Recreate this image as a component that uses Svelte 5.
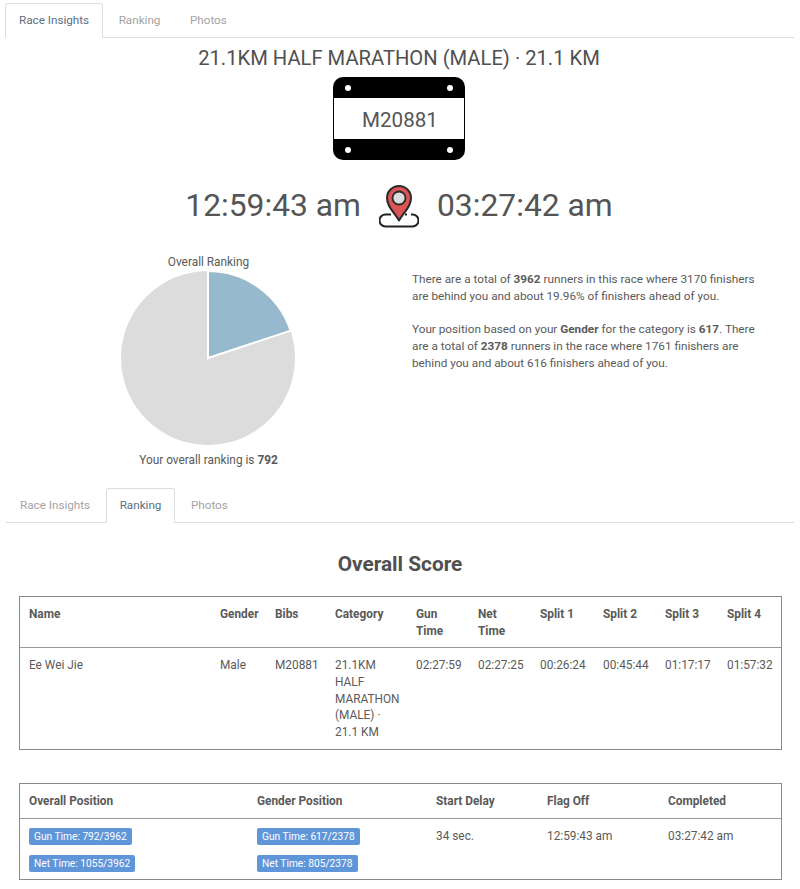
<script>
  const tabs = ['Race Insights', 'Ranking', 'Photos'];
  const heads = ['Name', 'Gender', 'Bibs', 'Category', 'Gun Time', 'Net Time', 'Split 1', 'Split 2', 'Split 3', 'Split 4'];
  const row = ['Ee Wei Jie', 'Male', 'M20881', '21.1KM HALF MARATHON (MALE) · 21.1 KM', '02:27:59', '02:27:25', '00:26:24', '00:45:44', '01:17:17', '01:57:32'];
</script>

{#snippet tabbar(active)}
  <div class="tabs" class:second={active === 1}>
    {#each tabs as t, i}
      <div class="tab" class:active={i === active}>{t}</div>
    {/each}
  </div>
{/snippet}

<div class="page">
  {@render tabbar(0)}
  <h1>21.1KM HALF MARATHON (MALE) · 21.1 KM</h1>
  <div class="bib">
    <span class="holes"><i></i><i></i></span>
    <span class="num">M20881</span>
    <span class="holes"><i></i><i></i></span>
  </div>
  <div class="times">
    <span>12:59:43 am</span>
    <svg width="40" height="46" viewBox="0 0 40 46" fill="none">
      <path d="M12 32.500H6.500a6 6 0 0 0 0 12h27a6 6 0 0 0 0-12H32" stroke="#222" stroke-width="2"/>
      <path d="M26 32.500h2" stroke="#222" stroke-width="2"/>
      <path d="M20 38.500C15 30 8 25 8 16a12 12 0 0 1 24 0C32 25 25 30 20 38.500Z" fill="#dc5454" stroke="#2a2a2a" stroke-width="2" stroke-linejoin="round"/>
      <circle cx="20" cy="16" r="6.500" fill="#dcdcdc" stroke="#2a2a2a" stroke-width="1.800"/>
    </svg>
    <span>03:27:42 am</span>
  </div>
  <div class="insights">
    <div class="chart">
      <div class="cap">Overall Ranking</div>
      <svg width="176" height="176" viewBox="-88 -88 176 176">
        <circle r="87" fill="#dcdcdc"/>
        <path d="M0 0V-87A87 87 0 0 1 82.600 -27.300Z" fill="#97b9cd" stroke="#fff" stroke-width="2"/>
      </svg>
      <div class="cap under">Your overall ranking is <b>792</b></div>
    </div>
    <div class="copy">
      <p>There are a total of <b>3962</b> runners in this race where 3170 finishers are behind you and about 19.96% of finishers ahead of you.</p>
      <p>Your position based on your <b>Gender</b> for the category is <b>617</b>. There are a total of <b>2378</b> runners in the race where 1761 finishers are behind you and about 616 finishers ahead of you.</p>
    </div>
  </div>
  {@render tabbar(1)}
  <h2>Overall Score</h2>
  <div class="table score">
    {#each heads as h}<div class="th">{h}</div>{/each}
    {#each row as c}<div class="td">{c}</div>{/each}
  </div>
  <div class="table pos">
    <div class="th">Overall Position</div>
    <div class="th">Gender Position</div>
    <div class="th">Start Delay</div>
    <div class="th">Flag Off</div>
    <div class="th">Completed</div>
    <div class="td"><span class="badge">Gun Time: 792/3962</span><span class="badge">Net Time: 1055/3962</span></div>
    <div class="td"><span class="badge">Gun Time: 617/2378</span><span class="badge">Net Time: 805/2378</span></div>
    <div class="td">34 sec.</div>
    <div class="td">12:59:43 am</div>
    <div class="td">03:27:42 am</div>
  </div>
</div>

<style>
  :global(body) { margin: 0; background: #fff; }
  .page {
    width: 800px; height: 889px; box-sizing: border-box; overflow: hidden;
    padding: 3px 7px 0 5px;
    font: 12px/16.8px Roboto, sans-serif; color: #5a5a5a;
  }
  .tabs { display: flex; height: 35px; margin-right: -1px; box-sizing: border-box; border-bottom: 1px solid #ddd; }
  .tabs.second { margin-left: 1px; }
  .tab {
    box-sizing: border-box; height: 35px; padding: 8px 13px 0;
    margin-right: 1.500px;
    font-size: 11.700px; color: #a3a3a3; border: 1px solid transparent;
  }
  .tab.active { color: #5b6f82; background: #fff; border-color: #ddd #ddd #fff; border-radius: 3px 3px 0 0; }
  h1 { margin: 8px 0 0; font: 400 20.200px/25px Roboto, sans-serif; text-align: center; color: #505050; }
  .bib {
    box-sizing: border-box; width: 132px; height: 83px; margin: 6px auto 0;
    display: flex; flex-direction: column; justify-content: space-between;
    background: #000; border-radius: 10px; overflow: hidden;
  }
  .holes { height: 21px; display: flex; justify-content: space-between; align-items: center; padding: 0 12px; }
  .holes i { width: 6px; height: 6px; border-radius: 50%; background: #fff; }
  .num {
    height: 41px; margin: 0 1px; padding-left: 2px; background: #fff; text-align: center;
    font-size: 20.600px; line-height: 45px; color: #555;
  }
  .times {
    display: flex; justify-content: center; align-items: center; gap: 18px;
    margin-top: 21px; height: 48px; font-size: 31.800px; line-height: 48px; color: #555;
  }
  .insights { display: flex; margin-top: 25px; height: 234px; }
  .chart { width: 407px; display: flex; flex-direction: column; align-items: center; font-size: 11.850px; }
  .chart svg { display: block; margin: -1px 0 0 -1px; }
  .cap { text-align: center; height: 17px; }
  .under { margin-top: 6px; }
  b { font-weight: 700; }
  .copy { width: 350px; margin-top: 17px; line-height: 17px; font-size: 11.760px; }
  .copy p { margin: 0 0 16px; }
  h2 { margin: 27px 0 0; padding-left: 2px; height: 31px; font: 700 20.800px/28px Roboto, sans-serif; text-align: center; color: #505050; }
  .table { display: grid; width: 763px; margin-left: 14px; border: 1px solid #8a8a8a; box-sizing: border-box; font-size: 11.850px; }
  .score { margin-top: 15px; grid-template-columns: 200px 55px 60px 81px 62px 62px 63px 62px 62px minmax(0, 1fr); }
  .pos { margin-top: 33px; grid-template-columns: 228px 179px 111px 121px minmax(0, 1fr); }
  .th { font-weight: 700; border-bottom: 1px solid #999; padding: 9px 14px 0 0; box-sizing: border-box; }
  .td { padding: 9px 14px 0 0; box-sizing: border-box; }
  .score .th:nth-child(10), .score .td:nth-child(20) { padding-right: 0; }
  .score .th { height: 51px; }
  .score .td { height: 101px; }
  .score .th:first-child, .score .td:nth-child(11) { padding-left: 9px; }
  .pos .th { height: 35px; padding-left: 9px; }
  .pos .td { height: 60px; padding-left: 9px; padding-top: 9px; }
  .badge {
    display: block; width: fit-content; margin-bottom: 10px; padding: 0 5px;
    height: 17px; line-height: 17px; border-radius: 2px; background: #5f96d9; color: #fff; font-size: 10.200px;
  }
</style>
